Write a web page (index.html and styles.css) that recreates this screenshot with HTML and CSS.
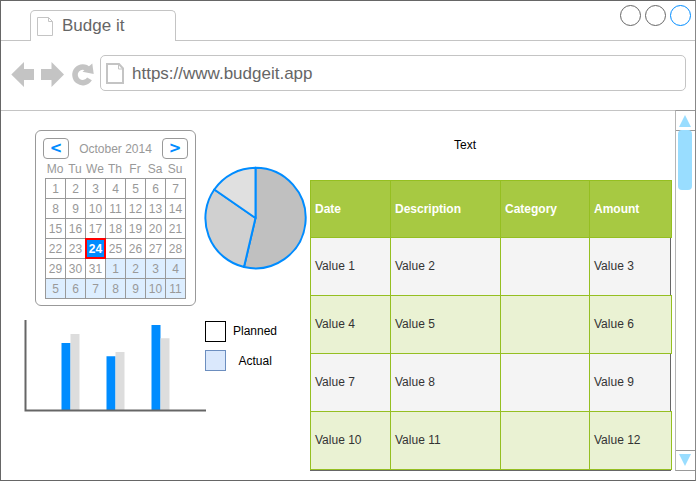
FILE: index.html
```html
<!DOCTYPE html>
<html lang="en">
<head>
<meta charset="utf-8">
<title>Budge it</title>
<link rel="stylesheet" href="styles.css">
</head>
<body>
<div class="window">
  <header class="tabs">
    <div class="tab">
      <svg class="tab-icon" width="16" height="19" viewBox="0 0 16 19"><path d="M.5.5H11.500L15.500 4.500V18.500H.5ZM11.500 .5V4.500H15.500"/></svg>
      <span>Budge it</span>
    </div>
    <div class="controls"><i></i><i></i><i class="active"></i></div>
  </header>
  <nav class="toolbar">
    <svg class="nav-icons" width="84" height="28" viewBox="10 61 84 28">
      <path d="M11.300 74.500 24 62V69H34V80H24V87ZM64 74.500 51.500 62V69H41V80H51.500V87Z"/>
      <path d="M92.300 63.500 93.700 74 82.500 71.700Z"/>
      <path class="ring" d="M88.500 69.500A7.800 7.800 0 1 0 89.500 78.800"/>
    </svg>
    <div class="address">
      <svg width="18" height="21" viewBox="0 0 18 21"><path d="M1 1H13L17 5.500V20H1Z"/><path class="fold" d="M12.500 1V6H17"/></svg>
      <span>https://www.budgeit.app</span>
    </div>
  </nav>
  <main class="content">
    <section class="left">
      <div class="row">
        <div class="calendar">
          <div class="cal-head"><b>&lt;</b><span>October 2014</span><b>&gt;</b></div>
          <div class="weekdays"><span>Mo</span><span>Tu</span><span>We</span><span>Th</span><span>Fr</span><span>Sa</span><span>Su</span></div>
          <div class="days">
            <span>1</span><span>2</span><span>3</span><span>4</span><span>5</span><span>6</span><span>7</span>
            <span>8</span><span>9</span><span>10</span><span>11</span><span>12</span><span>13</span><span>14</span>
            <span>15</span><span>16</span><span>17</span><span>18</span><span>19</span><span>20</span><span>21</span>
            <span>22</span><span>23</span><span class="today">24</span><span>25</span><span>26</span><span>27</span><span>28</span>
            <span>29</span><span>30</span><span>31</span><span class="next">1</span><span class="next">2</span><span class="next">3</span><span class="next">4</span>
            <span class="next">5</span><span class="next">6</span><span class="next">7</span><span class="next">8</span><span class="next">9</span><span class="next">10</span><span class="next">11</span>
          </div>
        </div>
        <svg class="pie" width="104" height="104" viewBox="203 166 104 104">
          <path fill="#c0c0c0" d="M255.500 218V167.700A50.300 50.300 0 1 1 244 267Z"/>
          <path fill="#d0d0d0" d="M255.500 218 244 267A50.300 50.300 0 0 1 214.300 189.500Z"/>
          <path fill="#e0e0e0" d="M255.500 218 214.300 189.500A50.300 50.300 0 0 1 255.500 167.700Z"/>
        </svg>
      </div>
      <div class="row lower">
        <svg class="bars" width="184" height="94" viewBox="23 319 184 94">
          <path fill="#008cff" d="M61.500 343H70.500V410H61.500ZM106.500 356.300H115.500V410H106.500ZM151.500 325H160.500V410H151.500Z"/>
          <path fill="#ddd" d="M70.500 334H79.500V410H70.500ZM115.500 352H124.500V410H115.500ZM160.500 338.300H169.500V410H160.500Z"/>
          <path fill="none" stroke="#666" stroke-width="2" d="M25.500 320V410.500H206"/>
        </svg>
        <div class="legend">
          <div><i class="planned"></i><span>Planned</span></div>
          <div><i class="actual"></i><span>Actual</span></div>
        </div>
      </div>
    </section>
    <section class="right">
      <h1>Text</h1>
      <div class="table">
        <div class="tr head"><span>Date</span><span>Description</span><span>Category</span><span>Amount</span></div>
        <div class="tr odd"><span>Value 1</span><span>Value 2</span><span></span><span>Value 3</span></div>
        <div class="tr even"><span>Value 4</span><span>Value 5</span><span></span><span>Value 6</span></div>
        <div class="tr odd"><span>Value 7</span><span>Value 8</span><span></span><span>Value 9</span></div>
        <div class="tr even"><span>Value 10</span><span>Value 11</span><span></span><span>Value 12</span></div>
      </div>
    </section>
    <aside class="scrollbar">
      <div class="arrow up"><svg width="12" height="12" viewBox="0 0 12 12"><path d="M6 0 12 12H0Z"/></svg></div>
      <div class="track"><div class="thumb"></div></div>
      <div class="arrow down"><svg width="12" height="12" viewBox="0 0 12 12"><path d="M0 0H12L6 12Z"/></svg></div>
    </aside>
  </main>
</div>
</body>
</html>
```
FILE: styles.css
```css
* { box-sizing: border-box; }
body { margin: 0; background: #fff; font: 12px/14px "Liberation Sans", Arial, sans-serif; color: #000; }
i, b, svg { display: block; flex: none; }
.window { width: 696px; height: 481px; border: 1px solid #666; border-right-color: #888; }

.tabs { height: 40px; border-bottom: 1px solid #c4c4c4; display: flex; justify-content: space-between; align-items: flex-start; padding-left: 29px; }
.tab { width: 146px; height: 31px; margin-top: 9px; border: 1px solid #c4c4c4; border-bottom: 0; border-radius: 5px 5px 0 0; background: #fff; display: flex; padding: 6px 0 0 6px; font-size: 17px; line-height: 18px; color: #666; }
.tab-icon { margin-right: 9px; fill: none; stroke: #c4c4c4; }
.controls { display: flex; gap: 4px; padding: 4px 4px 0 0; }
.controls i { width: 21px; height: 21px; border: 1px solid #666; border-radius: 50%; }
.controls .active { border-color: #008cff; }

.toolbar { height: 70px; border-bottom: 1px solid #c4c4c4; display: flex; padding: 14px 9px 0 9px; }
.nav-icons { margin: 6px 6px 0 0; fill: #c4c4c4; }
.nav-icons .ring { fill: none; stroke: #c4c4c4; stroke-width: 5.5; }
.address { width: 586px; height: 36px; border: 1px solid #c4c4c4; border-radius: 5px; display: flex; align-items: center; padding-left: 5px; font-size: 17px; color: #666; }
.address svg { margin-right: 8px; fill: none; stroke: #c4c4c4; stroke-width: 2; }
.address .fold { stroke-width: 1; }
.address span { padding-top: 2px; }

.content { height: 369px; display: flex; }
.left { width: 309px; padding-top: 19px; }
.row { display: flex; }
.calendar { width: 161px; height: 176px; margin-left: 34px; border: 1px solid #999; border-radius: 6px; color: #999; padding: 7px 7px 0; }
.cal-head { display: flex; justify-content: space-between; align-items: center; height: 21px; }
.cal-head b { width: 26px; height: 21px; border: 1px solid #999; border-radius: 4px; color: #008cff; font: bold 15px/18px "DejaVu Sans", Verdana, sans-serif; text-align: center; }
.weekdays, .days { display: grid; grid-template-columns: repeat(7, 20px); text-align: center; }
.weekdays { margin-left: 2px; line-height: 20px; height: 19px; }
.days { width: 141px; margin-left: 2px; border: solid #999; border-width: 1px 0 0 1px; line-height: 20px; }
.days span { height: 20px; border: solid #999; border-width: 0 1px 1px 0; }
.days .next { background: #ddeeff; }
.days .today { position: relative; z-index: 1; height: 19px; margin-right: 1px; border: 1px solid #f00; box-shadow: 0 0 0 1px #f00; background: #008cff; color: #fff; font-weight: bold; line-height: 18px; }
.pie { margin: 36px 0 0 7px; stroke: #008cff; stroke-width: 2; stroke-linejoin: round; }
.lower { padding: 13px 0 0 22px; }
.legend { margin: 2px 0 0 -2px; display: flex; flex-direction: column; gap: 8px; }
.legend div { display: flex; }
.legend i { width: 21px; height: 21px; border: 1px solid #000; }
.legend .actual { background: #dae8fc; border-color: #6c8ebf; }
.legend span { margin: 3px 0 0 7px; }
.legend .actual + span { margin: 4px 0 0 12.500px; }

.right { width: 365px; }
h1 { margin: 27px 0 0 144px; font: inherit; height: 42px; }
.table { width: 361px; border-bottom: 1px solid #666; }
.tr { display: grid; grid-template-columns: 80px 110px 89px 83px; width: 362px; height: 58px; border-top: 1px solid #95bf21; color: #333; }
.tr span { border-left: 1px solid #95bf21; padding-left: 4px; line-height: 56px; }
.tr span:last-child { border-right: 1px solid #95bf21; }
.head { height: 57px; background: #a7c942; color: #fff; font-weight: bold; }
.odd span { background: #f4f4f4; line-height: 57px; }
.odd span:last-child { border-right-color: #666; margin-right: 1px; }
.even { background: #eaf2d3; }
.tr:last-child { height: 59px; border-bottom: 1px solid #95bf21; }

.scrollbar { width: 20px; height: 361px; margin-top: -1px; display: flex; flex-direction: column; border: 1px solid #999; border-left-color: #b5b5b5; border-right: 0; }
.arrow { height: 19px; padding: 4px 0 0 3px; }
.arrow svg { fill: #99ddff; }
.down { padding-top: 3px; }
.track { flex: 1; border: solid #999; border-width: 1px 0; }
.thumb { width: 14px; height: 60px; margin: -1px 0 0 2px; border-radius: 4px; background: #99ddff; }
```
